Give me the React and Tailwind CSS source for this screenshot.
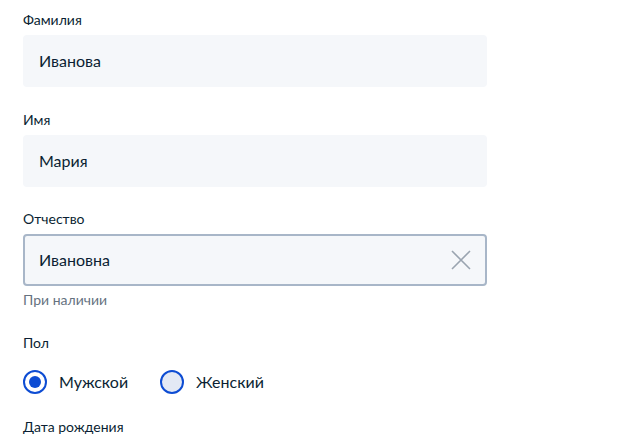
import React from "react";

function Field({ label, value, active }) {
  return (
    <div className="flex flex-col">
      <div className="h-5 leading-5 text-[14px] text-[#0b1f33]">{label}</div>
      <div
        className={
          "mt-[5px] h-[52px] w-[464px] rounded-[4px] flex items-center pr-3 text-[16px] text-[#0b1f33] bg-[#f5f7fa] " +
          (active ? "border-2 border-[#a8b6c8] pl-[14px]" : "pl-4")
        }
      >
        <span className="flex-1">{value}</span>
        {active && (
          <svg width="22" height="22" viewBox="0 0 22 22" className="mr-[1px]">
            <path d="M2 2 L20 20 M20 2 L2 20" stroke="#9aa4b0" strokeWidth="1.6" fill="none" />
          </svg>
        )}
      </div>
    </div>
  );
}

function Radio({ checked, label }) {
  return (
    <div className="flex items-center">
      <div
        className={
          "w-6 h-6 rounded-full border-2 border-[#0d4cd3] flex items-center justify-center " +
          (checked ? "bg-white" : "bg-[#e3e9f5]")
        }
      >
        {checked && <div className="w-3 h-3 rounded-full bg-[#0d4cd3]" />}
      </div>
      <span className="ml-3 text-[16px] text-[#0b1f33]">{label}</span>
    </div>
  );
}

export default function App() {
  return (
    <div
      className="w-[637px] h-[445px] bg-white overflow-hidden pl-[23px] pt-[10px]"
      style={{ fontFamily: "Lato, 'Noto Sans', sans-serif" }}
    >
      <Field label="Фамилия" value="Иванова" />
      <div className="h-[23px]" />
      <Field label="Имя" value="Мария" />
      <div className="h-[22px]" />
      <Field label="Отчество" value="Ивановна" active />
      <div className="mt-[4px] h-5 leading-5 text-[14px] text-[#66727f]">При наличии</div>
      <div className="mt-[23px] h-5 leading-5 text-[14px] text-[#0b1f33]">Пол</div>
      <div className="mt-[17px] flex gap-[32px]">
        <Radio checked label="Мужской" />
        <Radio label="Женский" />
      </div>
      <div className="mt-[23px] h-5 leading-5 text-[14px] text-[#0b1f33]">Дата рождения</div>
    </div>
  );
}
